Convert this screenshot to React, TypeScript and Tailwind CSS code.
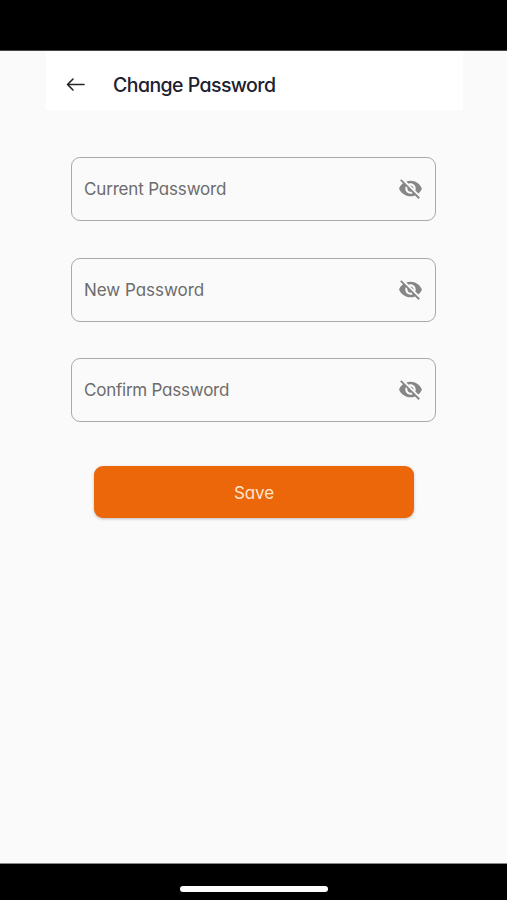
import { useState } from "react";
import { MdVisibility, MdVisibilityOff } from "react-icons/md";

const FIELDS = [
  { label: "Current Password", tracking: "tracking-[-0.17px]" },
  { label: "New Password", tracking: "tracking-[-0.03px]" },
  { label: "Confirm Password", tracking: "tracking-[-0.23px]" },
];

function PasswordField({ label, tracking }: { label: string; tracking: string }) {
  const [visible, setVisible] = useState(false);
  const Icon = visible ? MdVisibility : MdVisibilityOff;

  return (
    <div className="flex h-16 items-center justify-between rounded-[9px] border border-[#a9a9a9] pr-3 pl-3">
      <span className={`text-[17px] leading-6 whitespace-nowrap text-[#6c6c6c] ${tracking}`}>{label}</span>
      <button type="button" aria-label="Toggle visibility" className="mb-px" onClick={() => setVisible(v => !v)}>
        <Icon className="size-[25px] text-[#868686]" />
      </button>
    </div>
  );
}

export default function App() {
  return (
    <div className="flex h-[900px] w-[507px] flex-col overflow-hidden bg-[#fafafa] font-['Inter',sans-serif] [font-feature-settings:'cv11']">
      <div className="h-[51px] shrink-0 border-b border-[#4a4646] bg-black" />

      {/* App bar */}
      <header className="mr-[44px] ml-[46px] flex h-[59px] shrink-0 items-center bg-white pb-px pl-5">
        <button type="button" aria-label="Back" className="mt-[9px]">
          <svg className="h-4 w-5" viewBox="0 0 20 16" fill="none" stroke="#242424" strokeWidth="1.6" strokeLinecap="round" strokeLinejoin="round">
            <path d="M18 7.5H1.5M7 2L1.5 7.5 7 13" />
          </svg>
        </button>
        <h1 className="mt-[9px] ml-[27px] text-[19.5px] leading-6 font-medium tracking-[-0.56px] whitespace-nowrap text-[#20202f]">Change Password</h1>
      </header>

      <main className="flex flex-1 flex-col px-[71px] pt-[47px]">
        <div className="flex flex-col gap-[36.5px]">
          {FIELDS.map(f => <PasswordField key={f.label} {...f} />)}
        </div>
        <button type="button" className="mr-[22px] ml-[23px] mt-11 h-[52px] rounded-[9px] bg-[#eb670a] pt-[3px] text-[17px] tracking-[-0.1px] text-[#ffe5cf] shadow-[0_1px_3px_rgba(0,0,0,0.25)]">
          Save
        </button>
      </main>

      <div className="flex h-[37px] shrink-0 justify-center border-t border-[#888] bg-black pt-[22px]">
        <div className="h-[6px] w-[148px] rounded-full bg-white" />
      </div>
    </div>
  );
}
